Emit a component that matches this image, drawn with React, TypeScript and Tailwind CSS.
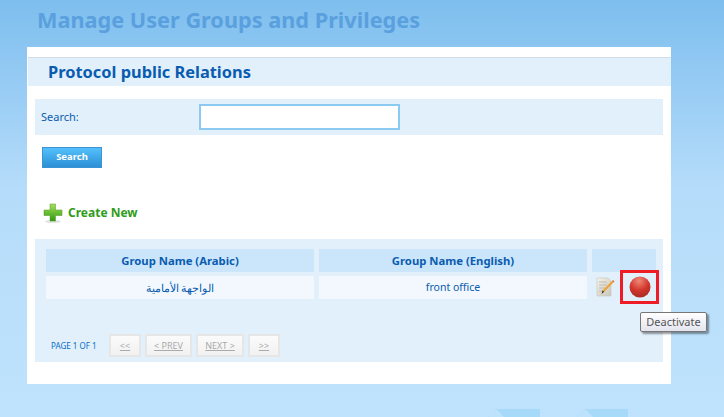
const Plus = () => (
  <svg width="20" height="20" viewBox="0 0 20 20" className="shrink-0">
    <defs>
      <linearGradient id="pg" x1="0" y1="0" x2="0" y2="1">
        <stop offset="0" stopColor="#a6e05a" />
        <stop offset="1" stopColor="#2f9a12" />
      </linearGradient>
    </defs>
    <ellipse cx="10" cy="18.5" rx="8" ry="1.3" fill="#00000022" />
    <path d="M7 1h5.5v6H19v5.5h-6.5V18H7v-5.5H1V7h6z" fill="url(#pg)" stroke="#4c9a20" strokeWidth="0.5" />
  </svg>
);

const Pencil = () => (
  <svg width="20" height="22" viewBox="0 0 20 22">
    <defs>
      <linearGradient id="pap" x1="0" y1="0" x2="1" y2="1">
        <stop offset="0" stopColor="#f4f2ea" />
        <stop offset="1" stopColor="#c9c6bb" />
      </linearGradient>
    </defs>
    <path d="M1 2h11l3 3v15H1z" fill="url(#pap)" stroke="#c6c3b8" strokeWidth="0.6" />
    <path d="M3 6h8M3 9h8M3 12h6M3 15h5" stroke="#b5b2a6" strokeWidth="0.8" />
    <path d="M5.5 18l1.2-3.6L16 5l1.4 1.4-9.2 9.4z" fill="#f0a030" />
    <path d="M5.5 18l1.2-3.6 1.5 1.4z" fill="#333" />
    <path d="M16 5l1-1 1.4 1.4-1 1z" fill="#e06a20" />
  </svg>
);

const RedDot = () => (
  <svg width="22" height="22" viewBox="0 0 22 22">
    <defs>
      <radialGradient id="rd" cx="0.45" cy="0.2" r="0.85">
        <stop offset="0" stopColor="#ef8878" />
        <stop offset="0.55" stopColor="#d2372c" />
        <stop offset="1" stopColor="#a52a22" />
      </radialGradient>
    </defs>
    <circle cx="11" cy="11" r="10.5" fill="url(#rd)" />
  </svg>
);

const PageBtn = ({ w, label }: { w: string; label: string }) => (
  <span className={`${w} h-[23px] flex items-center justify-center border-2 border-[#e6e6e6] bg-gradient-to-b from-[#fbfbfb] to-[#f1f1f1] text-[9px] text-[#aaaaaa] underline whitespace-pre`}>
    {label}
  </span>
);

export default function App() {
  return (
    <div className="relative w-[724px] h-[417px] overflow-hidden bg-gradient-to-b from-[#7dbeee] via-[#b5dcfa] via-[45%] to-[#bfe3fc] font-['Noto_Sans',sans-serif]">
      <h1 className="h-[47px] pl-[37px] pt-[5px] text-[21.7px] leading-[30px] font-bold text-[#5aa0de] whitespace-nowrap">
        Manage User Groups and Privileges
      </h1>

      <div className="ml-[27px] w-[644px] h-[337px] bg-white pt-[10px]">
        <div className="ml-px h-[29px] border-t border-[#d3dbe3] bg-[#e1f0fb] pl-5 flex items-center">
          <h2 className="text-[16.4px] font-bold text-[#0a5cb0]">Protocol public Relations</h2>
        </div>

        <div className="mt-[13px] mx-2 h-[36px] bg-[#e1f0fb] flex items-center pl-1.5">
          <span className="w-[158px] text-[11px] text-[#0a5cb0]">Search:</span>
          <input className="w-[201px] h-[26px] bg-white border-2 border-[#8ccaf2] outline-none" />
        </div>

        <button className="block mt-3 ml-[15px] w-[60px] h-[21px] border border-[#3a92d2] bg-gradient-to-b from-[#55c0fb] to-[#2a8fd6] text-white text-[9.5px] font-bold">
          Search
        </button>

        <div className="mt-[35px] ml-4 flex items-center gap-[5px] h-[20px]">
          <Plus />
          <span className="text-[12px] font-bold text-[#2f9c1a]">Create New</span>
        </div>

        <div className="mt-[16px] mx-2 h-[123px] bg-[#e1f0fb] pt-2.5 pl-[11px]">
          <div className="grid grid-cols-[268px_268px_64px] gap-x-[5px] gap-y-1 text-[#0a5cb0]">
            <div className="h-[23px] pt-px bg-[#cbe6fb] flex items-center justify-center font-bold text-[11.3px]">Group Name (Arabic)</div>
            <div className="h-[23px] pt-px bg-[#cbe6fb] flex items-center justify-center font-bold text-[11.3px]">Group Name (English)</div>
            <div className="h-[23px] bg-[#cbe6fb]" />
            <div className="h-[23px] pt-px bg-[#f2f8fd] flex items-center justify-center text-[11px]">الواجهة الأمامية</div>
            <div className="h-[23px] pt-px bg-[#f2f8fd] flex items-center justify-center text-[10.5px]">front office</div>
            <div className="h-[23px] flex items-start pl-[4px] gap-[13px]">
              <Pencil />
              <RedDot />
            </div>
          </div>
          <div className="mt-[35px] flex items-center h-[23px] pl-[5px]">
            <span className="w-[58px] text-[8px] text-[#0a6cc8] whitespace-nowrap">PAGE 1 OF 1</span>
            <div className="flex gap-1">
              <PageBtn w="w-[32px]" label="<<" />
              <PageBtn w="w-[47px]" label="< PREV" />
              <PageBtn w="w-[48px]" label="NEXT >" />
              <PageBtn w="w-[32px]" label=">>" />
            </div>
          </div>
        </div>
      </div>

      <div className="absolute left-[620px] top-[270px] w-[39px] h-[34px] border-[3px] border-[#ee1c25]" />

      <div className="absolute left-[640px] top-[312px] w-[67px] h-[20px] rounded-[2px] border border-[#767676] bg-gradient-to-b from-white to-[#e4e5f0] shadow-[2px_2px_2px_rgba(0,0,0,0.4)] flex items-center justify-center text-[11px] text-[#555555]">
        Deactivate
      </div>

      <svg className="absolute left-[488px] top-[409px]" width="140" height="8" viewBox="0 0 140 8">
        <path d="M0 8l8-8h44v8z" fill="#a6daf8" />
        <path d="M0 8l8-8 8 8z" fill="#bde2fb" />
        <path d="M89 8l8-8h43v8z" fill="#a6daf8" />
        <path d="M89 8l8-8 8 8z" fill="#bde2fb" />
      </svg>
    </div>
  );
}
